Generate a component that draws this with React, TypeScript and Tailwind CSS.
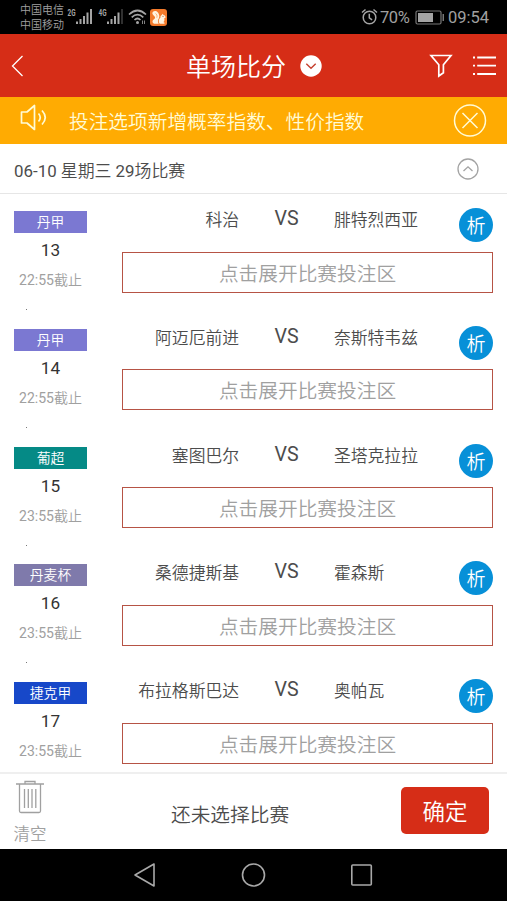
import clsx from "clsx";

interface Match {
  no: number;
  league: string;
  color: string;
  deadline: string;
  home: string;
  away: string;
}

const matches: Match[] = [
  { no: 13, league: "丹甲", color: "bg-[#7b78d2]", deadline: "22:55", home: "科治", away: "腓特烈西亚" },
  { no: 14, league: "丹甲", color: "bg-[#7b78d2]", deadline: "22:55", home: "阿迈厄前进", away: "奈斯特韦兹" },
  { no: 15, league: "葡超", color: "bg-[#058a86]", deadline: "23:55", home: "塞图巴尔", away: "圣塔克拉拉" },
  { no: 16, league: "丹麦杯", color: "bg-[#7f7aab]", deadline: "23:55", home: "桑德捷斯基", away: "霍森斯" },
  { no: 17, league: "捷克甲", color: "bg-[#1748c9]", deadline: "23:55", home: "布拉格斯巴达", away: "奥帕瓦" },
];

function Signal({ label, dim }: { label: string; dim?: boolean }) {
  return (
    <svg width="26" height="18" viewBox="0 0 26 18" fill="#a5a5a5">
      <text x="0.5" y="7.5" fontSize="9" fontWeight="700" textLength="8" lengthAdjust="spacingAndGlyphs">
        {label}
      </text>
      <rect x="9" y="13.5" width="2" height="2.5" />
      <rect x="12.5" y="11" width="2" height="5" />
      <rect x="16" y="8" width="2" height="8" />
      <rect x="19.5" y="4.5" width="2" height="11.5" />
      <rect x="23" y="1" width="2" height="15" fill={dim ? "#303030" : "#a5a5a5"} />
    </svg>
  );
}

function StatusBar() {
  return (
    <div className="flex h-[34px] shrink-0 items-center bg-black pl-5 pr-4 text-[#a0a0a0]">
      <div className="w-[47px] pt-0.5 text-[11px] leading-[15.5px]">
        <div>中国电信</div>
        <div>中国移动</div>
      </div>
      <div className="flex items-center">
        <Signal label="2G" />
        <div className="w-[4.5px]" />
        <Signal label="4G" dim />
        <svg className="ml-1" width="20" height="18" viewBox="0 0 20 18" fill="none" stroke="#a5a5a5" strokeWidth="1.7">
          <path d="M1 6.5Q9.5-1.5 18 6.5" />
          <path d="M3.7 9.3Q9.5 3.8 15.3 9.3" />
          <path d="M6.5 12Q9.5 9 12.5 12" />
          <circle cx="9.5" cy="14.5" r="1.5" fill="#a5a5a5" stroke="none" />
          <path d="M14.5 12.5v3.5M16.500 12.500v3.500" strokeWidth=".8" />
        </svg>
        <svg className="ml-[2.5px]" width="17" height="17" viewBox="0 0 17 17">
          <rect width="17" height="17" rx="3" fill="#f37a2b" />
          <path
            d="M6 2C3.500 1.500 1.800 3.200 2.500 5c.7 1.600 2.800 2.200 2.600 3.800C4.900 10.300 2.500 10.500 2.500 12.500c0 1.500 1.200 2.300 2.700 2.300h3.600c-1.300-1.800-1-4 .1-5.600C10.200 7.300 8.500 2.700 6 2z"
            fill="#fff3df"
          />
          <path
            d="M9.700 14.800h4.600c.8-.9 0-1.600-1-1.600 1.300-1 1.500-2.600.7-3.900 1 0 1.700-.6 1.500-1.400-.3-1.200-1.100-2-2.300-2.100l-.9-1-.5 1.300c-1 .4-1.500 1.300-1.300 2.300-1.800 1.400-2.400 4.400-.8 6.400z"
            fill="#fff3df"
          />
          <path d="M5.500 4.500c1.500.8 1.800 2.600 1.300 4.200" stroke="#f37a2b" strokeWidth=".6" fill="none" />
          <circle cx="13" cy="7.300" r=".5" fill="#7a3b12" />
        </svg>
      </div>
      <div className="ml-auto flex items-center font-normal">
        <svg className="-ml-[3px] mr-0.5" width="17" height="18" viewBox="0 0 17 18" fill="none" stroke="#a5a5a5" strokeWidth="1.5">
          <circle cx="8.5" cy="9.5" r="6.3" />
          <path d="M8.3 5.8v4l2.8 2M1 4.5L4.5 1.5M16 4.5L12.5 1.5" />
        </svg>
        <span className="w-[33px] whitespace-nowrap pt-0.5 text-[16.5px] tracking-[-0.4px]">70%</span>
        <svg className="ml-0.5" width="30" height="15" viewBox="0 0 30 15">
          <rect x="1" y="1" width="25" height="13" rx="1.5" fill="none" stroke="#777" strokeWidth="1.2" />
          <rect x="3" y="3" width="15" height="9" fill="#a5a5a5" />
          <rect x="27.5" y="4" width="1.5" height="7" fill="#777" />
        </svg>
        <span className="ml-[3px] w-[43px] whitespace-nowrap pt-0.5 text-[16.5px]">09:54</span>
      </div>
    </div>
  );
}

function Header() {
  return (
    <header className="flex h-[63px] shrink-0 items-center bg-[#d62d17] pl-[11px] pr-[11px] text-white">
      <svg width="13" height="22" viewBox="0 0 13 22" fill="none" stroke="white" strokeWidth="1.3">
        <path d="M11.5 1L1.5 11l10 10" />
      </svg>
      <h1 className="ml-[162px] pt-1 text-[25px] leading-8">单场比分</h1>
      <svg className="ml-[14px]" width="22" height="22" viewBox="0 0 22 22">
        <circle cx="11" cy="11" r="10.7" fill="white" />
        <path d="M6.3 8.8l4.7 4.5 4.7-4.5" fill="none" stroke="#c5402f" strokeWidth="1.4" />
      </svg>
      <svg className="ml-auto" width="24" height="24" viewBox="0 0 24 24" fill="none" stroke="white" strokeWidth="1.7">
        <path d="M2 1.500h20l-7.600 9.300v7.900L9.800 22V10.800z" />
      </svg>
      <svg className="ml-5" width="23" height="20" viewBox="0 0 23 20" stroke="white" strokeWidth="1.8">
        <path d="M0 1.5h2M0 9.7h2M0 18h2M4.200 1.500H23M4.200 9.700H23M4.200 18H23" />
      </svg>
    </header>
  );
}

function Notice() {
  return (
    <div className="flex h-[47px] shrink-0 items-center bg-[#ffab02] pl-5 pr-5 text-[#fffbd6]">
      <svg className="mb-1.5" width="28" height="27" viewBox="0 0 28 27" fill="none" stroke="currentColor" strokeWidth="1.7">
        <path d="M1.5 8H7l7.5-6.5v24L7 19H1.5z" strokeLinejoin="round" />
        <path d="M18.500 9.500q3.500 4 0 8M22 6.500q6.500 7 0 14" />
      </svg>
      <p className="ml-[21px] pt-1 text-[19.7px] leading-7">投注选项新增概率指数、性价指数</p>
      <svg className="ml-auto" width="34" height="34" viewBox="0 0 34 34" fill="none" stroke="currentColor" strokeWidth="1.5">
        <circle cx="17" cy="16.5" r="15.5" />
        <path d="M9.5 9l15 15M24.5 9l-15 15" />
      </svg>
    </div>
  );
}

function DateRow() {
  return (
    <div className="flex h-[50px] shrink-0 items-center justify-between border-b border-[#e6e6e6] pl-[14px] pr-7">
      <span className="pt-[5px] text-[16.9px] leading-6 text-[#4c4c4c]">
        <span className="font-normal">06-10</span> 星期三 <span className="font-normal">29</span>场比赛
      </span>
      <svg width="22" height="22" viewBox="0 0 22 22" fill="none" stroke="#a3a3a3" strokeWidth="1.3">
        <circle cx="11" cy="11" r="10" />
        <path d="M6.5 13l4.5-4.2 4.5 4.2" />
      </svg>
    </div>
  );
}

function MatchRow({ match, last }: { match: Match; last: boolean }) {
  return (
    <div className="flex h-[117.8px] shrink-0 pl-[14px] pr-[14px] pt-[14px]">
      <div className="w-[73px] pt-[3px] text-center">
        <div className={clsx("h-[22px] text-[13.8px] leading-[23px] text-white", match.color)}>{match.league}</div>
        <div className="mt-[6px] text-[17.2px] font-normal leading-[22px] text-[#333]">{match.no}</div>
        <div className="mt-[9px] text-[14px] leading-5 text-[#a0a0a0]">
          <span className="font-normal">{match.deadline}</span>截止
        </div>
        {!last && <div className="ml-3 mt-[19px] h-px w-px bg-[#777]" />}
      </div>
      <div className="ml-[35px] flex-1">
        <div className="flex h-[34px] text-[16.8px] leading-[24px] text-[#4c4c4c]">
          <div className="w-[117px] text-right">{match.home}</div>
          <div className="w-[95px] text-center text-[19.6px] font-normal leading-[21px]">VS</div>
          <div className="flex-1">{match.away}</div>
          <button className="size-[34px] rounded-full bg-[#0790d8] text-[19px] leading-[37px] text-white">析</button>
        </div>
        <button className="mt-[9.5px] block h-[41px] w-full border border-[#b65345] pt-px text-[19.7px] leading-[42px] text-[#a0a0a0]">
          点击展开比赛投注区
        </button>
      </div>
    </div>
  );
}

function BottomBar() {
  return (
    <footer className="flex h-[77px] shrink-0 border-t-2 border-[#efefef] pl-[13px] pr-[18px]">
      <div className="flex w-[34px] flex-col items-center pt-[6px] text-[#a0a0a0]">
        <svg width="30" height="34" viewBox="0 0 30 34" fill="none" stroke="currentColor" strokeWidth="1.3">
          <path d="M1 4h28M10 4V1.500h10V4M4.500 4v27q0 1.500 1.500 1.500h18q1.500 0 1.500-1.500V4M9.500 9v19M13.300 9v19M17 9v19M20.800 9v19" />
        </svg>
        <span className="mt-[9px] text-[16.5px] leading-6">清空</span>
      </div>
      <p className="ml-[124px] pt-[28px] text-[19.7px] leading-7 text-[#4c4c4c]">还未选择比赛</p>
      <button className="ml-auto mt-[13px] h-[47px] w-[88px] rounded-[5px] bg-[#d62d17] text-[22.5px] leading-[51px] text-white">
        确定
      </button>
    </footer>
  );
}

function NavBar() {
  return (
    <nav className="flex h-[52px] shrink-0 items-center justify-center gap-[84px] bg-black text-[#a9a9a9]">
      <svg width="24" height="26" viewBox="0 0 24 26" fill="none" stroke="currentColor" strokeWidth="1.6" strokeLinejoin="round">
        <path d="M21 2v22L2 13z" />
      </svg>
      <svg width="26" height="26" viewBox="0 0 26 26" fill="none" stroke="currentColor" strokeWidth="1.6">
        <circle cx="12.5" cy="13" r="11" />
      </svg>
      <svg width="24" height="26" viewBox="0 0 24 26" fill="none" stroke="currentColor" strokeWidth="1.6">
        <rect x="0.8" y="3" width="19.5" height="20" rx="1" />
      </svg>
    </nav>
  );
}

export default function App() {
  return (
    <div className="flex h-[901px] w-[507px] flex-col overflow-hidden bg-white font-['Roboto','Noto_Sans_CJK_SC',sans-serif] font-[350]">
      <StatusBar />
      <Header />
      <Notice />
      <DateRow />
      <main className="flex min-h-0 flex-1 flex-col overflow-hidden">
        {matches.map((m, i) => (
          <MatchRow key={m.no} match={m} last={i === matches.length - 1} />
        ))}
      </main>
      <BottomBar />
      <NavBar />
    </div>
  );
}
